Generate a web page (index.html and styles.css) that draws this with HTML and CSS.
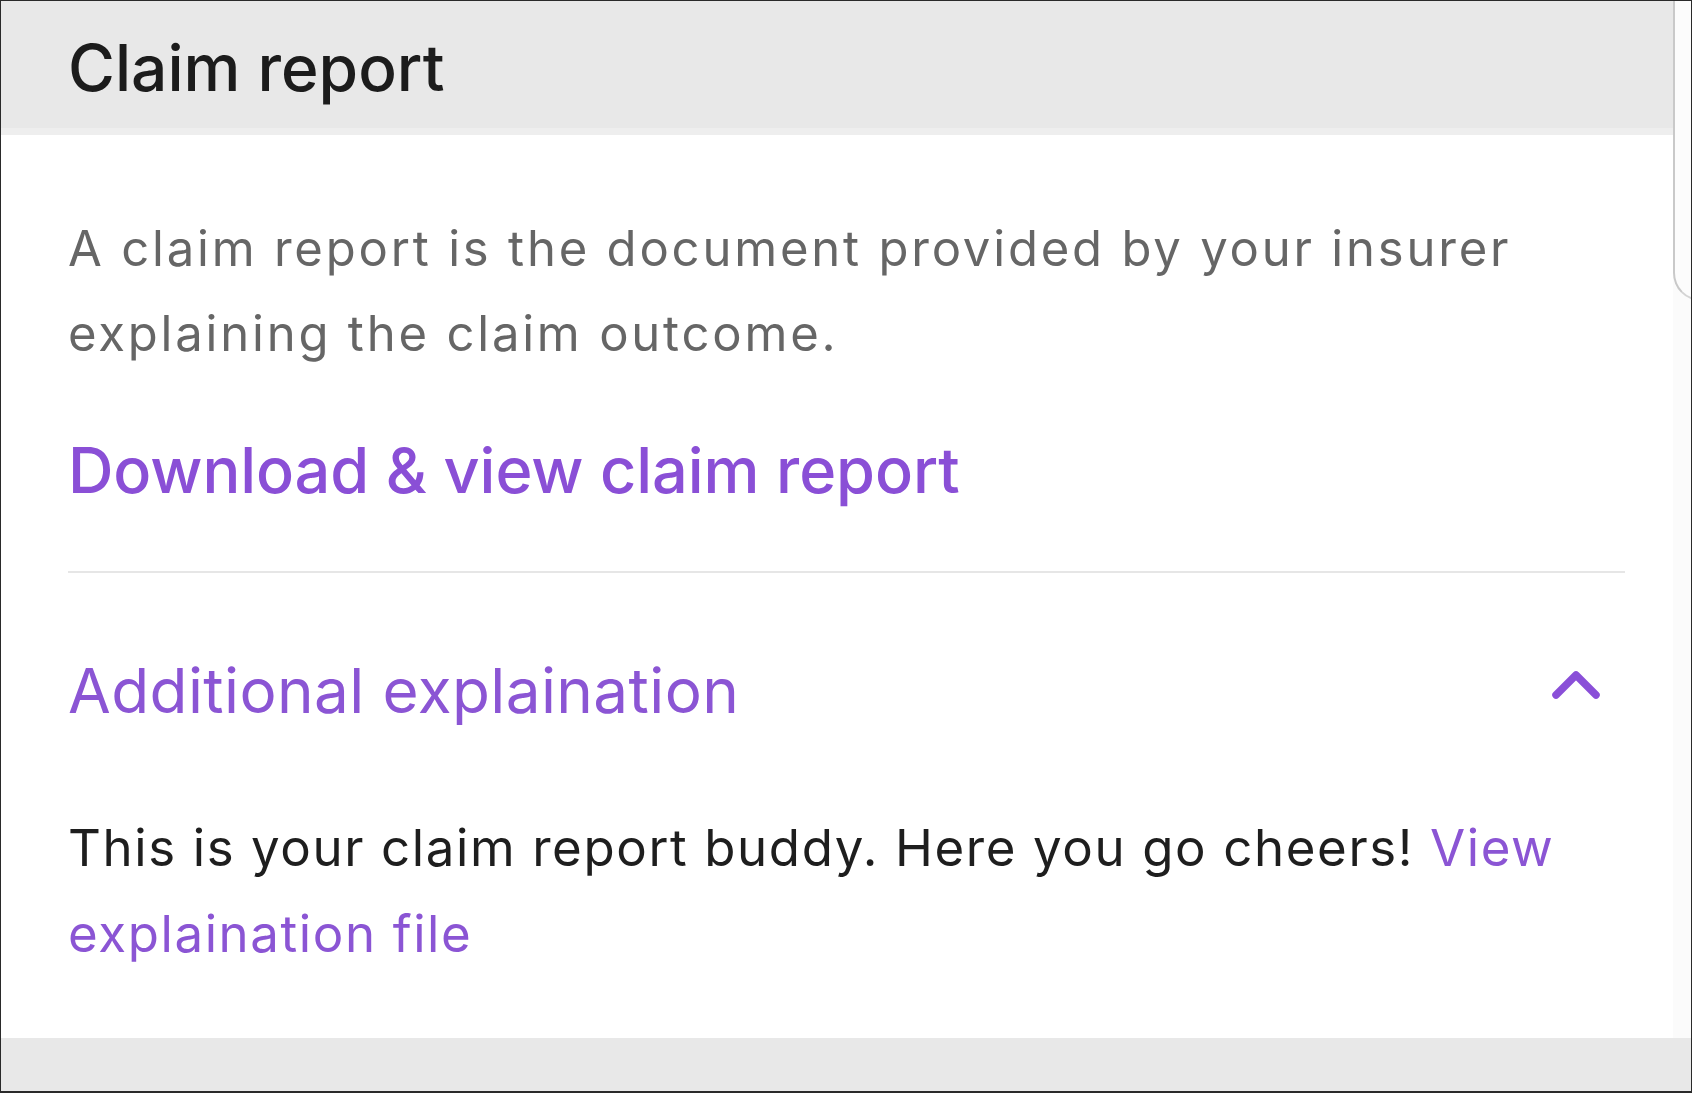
FILE: index.html
```html
<!DOCTYPE html>
<html lang="en">
<head>
<meta charset="utf-8">
<title>Claim report</title>
<link rel="stylesheet" href="styles.css">
</head>
<body>
<div class="frame">
  <div class="top">
    <main class="panel">
      <header class="panel-header">
        <h1 class="title">Claim report</h1>
      </header>
      <section class="panel-body">
        <p class="intro">A claim report is the document provided by your insurer explaining the claim outcome.</p>
        <a class="download" href="#">Download &amp; view claim report</a>
        <hr class="divider">
        <div class="accordion-head">
          <span class="accordion-title">Additional explaination</span>
          <svg class="chevron" width="48" height="30" viewBox="0 0 48 30" aria-hidden="true">
            <path d="M4 25 L24 5 L44 25" fill="none" stroke="#8a4fd8" stroke-width="7.5" stroke-linecap="round" stroke-linejoin="round"/>
          </svg>
        </div>
        <p class="explain">This is your claim report buddy. Here you go cheers! <a class="inline-link" href="#">View explaination file</a></p>
      </section>
    </main>
    <aside class="side">
      <div class="next-card"></div>
    </aside>
  </div>
  <footer class="footer"></footer>
</div>
</body>
</html>
```

FILE: styles.css
```css
* { box-sizing: border-box; }

html, body {
  margin: 0;
  padding: 0;
  background: #ffffff;
}

body {
  font-family: Inter, "Liberation Sans", Arial, sans-serif;
}

.frame {
  width: 1692px;
  height: 1093px;
  border: 1px solid #2a2a2a;
  border-bottom-width: 2px;
  display: flex;
  flex-direction: column;
  overflow: hidden;
  background: #ffffff;
}

.top {
  display: flex;
  flex: 1;
  min-height: 0;
}

.panel {
  width: 1672px;
  display: flex;
  flex-direction: column;
}

.panel-header {
  background: #e8e8e8;
  border-bottom: 7px solid #eeeeee;
  padding: 27px 0 20px 67px;
}

.title {
  margin: 0;
  font-size: 64px;
  line-height: 80px;
  font-weight: 500;
  color: #1c1c1c;
  letter-spacing: 0;
}

.panel-body {
  padding: 71px 48px 0 67px;
}

.intro {
  margin: 0;
  font-size: 49px;
  line-height: 85px;
  color: #666666;
  letter-spacing: 2.8px;
}

.download {
  display: block;
  margin-top: 54px;
  font-size: 63px;
  line-height: 80px;
  font-weight: 500;
  color: #8a4fd6;
  text-decoration: none;
  letter-spacing: -0.1px;
}

.divider {
  margin: 61px 0 0 0;
  border: 0;
  height: 2px;
  background: #e6e6e6;
}

.accordion-head {
  display: flex;
  align-items: center;
  justify-content: space-between;
  margin-top: 78px;
}

.accordion-title {
  font-size: 62px;
  line-height: 80px;
  color: #8b55d4;
  letter-spacing: 0.4px;
}

.chevron {
  margin-right: 25px;
  margin-bottom: 12px;
}

.explain {
  margin: 74px 0 0 0;
  font-size: 51px;
  line-height: 86px;
  color: #1e1e1e;
  letter-spacing: 1.6px;
}

.inline-link {
  color: #8b55d4;
  text-decoration: none;
}

.side {
  flex: 1;
  overflow: hidden;
  background: #fbfbfb;
}

.next-card {
  width: 60px;
  height: 300px;
  border-left: 2px solid #c9c9c9;
  border-bottom: 2px solid #d4d4d4;
  border-bottom-left-radius: 28px;
  background: #fcfcfc;
}

.footer {
  height: 53px;
  background: #e8e8e8;
  flex-shrink: 0;
}
```
